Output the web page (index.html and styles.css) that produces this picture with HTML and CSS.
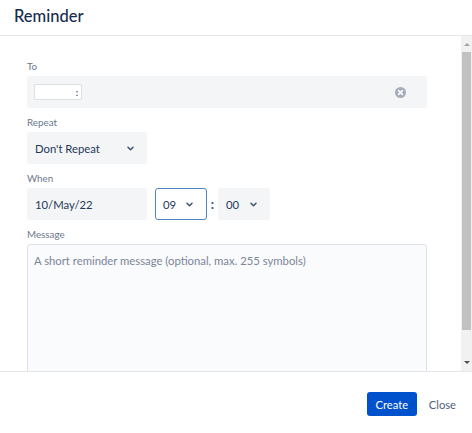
FILE: index.html
```html
<!DOCTYPE html>
<html lang="en">
<head>
<meta charset="utf-8">
<title>Reminder</title>
<link rel="stylesheet" href="styles.css">
</head>
<body>
<div class="dialog">
  <header class="dialog-header">
    <h1 class="dialog-title">Reminder</h1>
  </header>
  <div class="dialog-body">
    <div class="form">
      <div class="group">
        <label class="label">To</label>
        <div class="field to-field">
          <span class="chip"><span class="chip-text"></span><span class="chip-dot">:</span></span>
          <svg class="clear-icon" width="11" height="11" viewBox="0 0 11 11">
            <circle cx="5.5" cy="5.5" r="5.5" fill="#a5adba"/>
            <path d="M3.6 3.6 L7.4 7.4 M7.4 3.6 L3.6 7.4" stroke="#fff" stroke-width="1.6" stroke-linecap="round"/>
          </svg>
        </div>
      </div>
      <div class="group">
        <label class="label">Repeat</label>
        <div class="field select repeat-select">
          <span class="value">Don't Repeat</span>
          <svg class="chev" width="7" height="5" viewBox="0 0 7 5"><path d="M1 1.2 L3.5 3.7 L6 1.2" fill="none" stroke="#42526e" stroke-width="1.5" stroke-linecap="round" stroke-linejoin="round"/></svg>
        </div>
      </div>
      <div class="group">
        <label class="label">When</label>
        <div class="when-row">
          <div class="field date-field"><span class="value">10/May/22</span></div>
          <div class="field select time-select focused">
            <span class="value">09</span>
            <svg class="chev" width="7" height="5" viewBox="0 0 7 5"><path d="M1 1.2 L3.5 3.7 L6 1.2" fill="none" stroke="#42526e" stroke-width="1.5" stroke-linecap="round" stroke-linejoin="round"/></svg>
          </div>
          <span class="colon">:</span>
          <div class="field select time-select">
            <span class="value">00</span>
            <svg class="chev" width="7" height="5" viewBox="0 0 7 5"><path d="M1 1.2 L3.5 3.7 L6 1.2" fill="none" stroke="#42526e" stroke-width="1.5" stroke-linecap="round" stroke-linejoin="round"/></svg>
          </div>
        </div>
      </div>
      <div class="group">
        <label class="label">Message</label>
        <div class="textarea"><span class="placeholder">A short reminder message (optional, max. 255 symbols)</span></div>
      </div>
    </div>
    <div class="scrollbar">
      <div class="arrow arrow-up"></div>
      <div class="thumb"></div>
      <div class="track"></div>
      <div class="arrow arrow-down"></div>
    </div>
  </div>
  <footer class="dialog-footer">
    <button class="btn btn-primary">Create</button>
    <button class="btn btn-subtle">Close</button>
  </footer>
</div>
</body>
</html>
```
FILE: styles.css
```css
* { box-sizing: border-box; }
html, body { margin: 0; padding: 0; background: #fff; }
body {
  font-family: Lato, "Noto Sans", sans-serif;
  color: #172b4d;
}
.dialog {
  width: 472px;
  height: 433px;
  display: flex;
  flex-direction: column;
  overflow: hidden;
}
.dialog-header {
  height: 36px;
  flex: none;
  border-bottom: 1px solid #e4e6ea;
  display: flex;
  align-items: center;
  padding-left: 14px;
  padding-bottom: 4px;
}
.dialog-title {
  margin: 0;
  font-size: 16.5px;
  font-weight: 500;
  color: #172b4d;
}
.dialog-body {
  flex: none;
  height: 336px;
  display: flex;
  overflow: hidden;
}
.form {
  flex: 1;
  padding: 22px 0 0 27px;
  display: flex;
  flex-direction: column;
  gap: 6px;
  overflow: hidden;
}
.group { display: flex; flex-direction: column; }
.label {
  font-size: 9.8px;
  line-height: 16px;
  height: 16px;
  margin-bottom: 2px;
  color: #6b778c;
}
.field {
  height: 32px;
  background: #f4f5f7;
  border-radius: 3px;
  display: flex;
  align-items: center;
  padding-left: 8px;
  font-size: 11.3px;
  color: #253858;
}
.to-field {
  width: 400px;
  padding-left: 7px;
  padding-right: 21px;
  justify-content: space-between;
}
.chip {
  width: 48px;
  height: 16px;
  background: #fff;
  border: 1px solid #dde0e5;
  border-radius: 2px;
  display: flex;
  align-items: center;
  justify-content: flex-end;
  padding-right: 3px;
}
.chip-dot {
  font-size: 9px;
  line-height: 9px;
  color: #42526e;
  font-weight: 700;
}
.select { justify-content: space-between; padding-right: 13px; }
.repeat-select { width: 120px; padding-right: 13px; }
.when-row { display: flex; align-items: center; }
.date-field { width: 120px; margin-right: 8px; }
.time-select { width: 52px; padding-right: 13px; }
.time-select.focused {
  background: #fff;
  border: 1px solid #4c86c9;
  padding-left: 7px;
  padding-right: 13px;
}
.colon {
  width: 11px;
  text-align: center;
  font-size: 13px;
  font-weight: 700;
  color: #42526e;
}
.chev { display: block; }
.clear-icon { display: block; }
.textarea {
  width: 400px;
  height: 160px;
  flex: none;
  border: 1px solid #dfe1e6;
  background: #fafbfc;
  border-radius: 3px;
  padding: 8px 6px;
  font-size: 11.3px;
  line-height: 16px;
}
.placeholder { color: #7a869a; }
.scrollbar {
  width: 11px;
  flex: none;
  background: #f1f1f1;
  display: flex;
  flex-direction: column;
  align-items: center;
}
.arrow { width: 0; height: 0; flex: none; }
.arrow-up {
  margin: 7px 0 6px;
  border-left: 3px solid transparent;
  border-right: 3px solid transparent;
  border-bottom: 3px solid #a3a3a3;
}
.thumb {
  width: 9px;
  height: 278px;
  background: #c1c1c1;
  flex: none;
}
.track { flex: 1; }
.arrow-down {
  margin: 0 0 8px;
  border-left: 3px solid transparent;
  border-right: 3px solid transparent;
  border-top: 3px solid #505050;
}
.dialog-footer {
  flex: 1;
  border-top: 1px solid #e4e6ea;
  display: flex;
  justify-content: flex-end;
  align-items: center;
  padding: 0 8px 0 0;
  gap: 4px;
  margin-top: -1px;
}
.btn {
  font-family: inherit;
  font-size: 11.2px;
  height: 24px;
  border: none;
  border-radius: 3px;
  padding: 0 8px;
  cursor: pointer;
}
.btn-primary {
  background: #0052cc;
  color: #fff;
  width: 50px;
  padding: 0;
  margin-top: 3px;
}
.btn-subtle {
  background: transparent;
  color: #505f79;
  margin-top: 3px;
}
```
